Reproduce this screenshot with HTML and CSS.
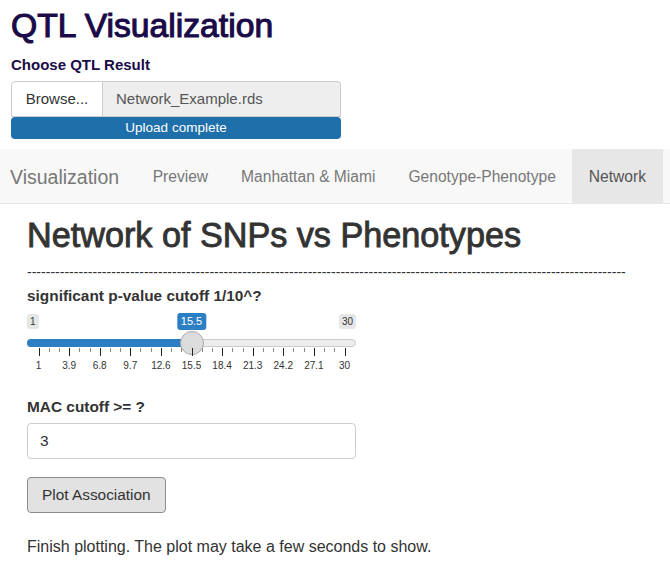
FILE: index.html
```html
<!DOCTYPE html>
<html>
<head>
<meta charset="utf-8">
<title>QTL Visualization</title>
<link rel="stylesheet" href="styles.css">
</head>
<body>
<header class="top">
  <h1 class="app-title">QTL Visualization</h1>
  <label class="top-label">Choose QTL Result</label>
  <div class="file-input">
    <span class="browse">Browse...</span>
    <span class="file-name">Network_Example.rds</span>
  </div>
  <div class="progress">Upload complete</div>
</header>

<nav class="navbar">
  <span class="brand">Visualization</span>
  <ul class="tabs">
    <li>Preview</li>
    <li>Manhattan &amp; Miami</li>
    <li>Genotype-Phenotype</li>
    <li class="active">Network</li>
  </ul>
</nav>

<main class="content">
  <h2 class="page-heading">Network of SNPs vs Phenotypes</h2>
  <p class="divider">--------------------------------------------------------------------------------------------------------------------------------</p>

  <label class="field-label">significant p-value cutoff 1/10^?</label>
  <div class="slider">
    <div class="slider-labels">
      <span class="irs-min">1</span>
      <span class="irs-max">30</span>
    </div>
    <span class="irs-single" style="left: 50%;">15.5</span>
    <div class="irs-line"><div class="irs-bar" style="width: calc(50% + 1px);"></div></div>
    <span class="irs-handle" style="left: 50%;"></span>
    <div class="irs-grid">
      <span class="pol" style="left:0%"></span>
      <span class="pol small" style="left:3.333%"></span>
      <span class="pol small" style="left:6.667%"></span>
      <span class="pol" style="left:10%"></span>
      <span class="pol small" style="left:13.333%"></span>
      <span class="pol small" style="left:16.667%"></span>
      <span class="pol" style="left:20%"></span>
      <span class="pol small" style="left:23.333%"></span>
      <span class="pol small" style="left:26.667%"></span>
      <span class="pol" style="left:30%"></span>
      <span class="pol small" style="left:33.333%"></span>
      <span class="pol small" style="left:36.667%"></span>
      <span class="pol" style="left:40%"></span>
      <span class="pol small" style="left:43.333%"></span>
      <span class="pol small" style="left:46.667%"></span>
      <span class="pol" style="left:50%"></span>
      <span class="pol small" style="left:53.333%"></span>
      <span class="pol small" style="left:56.667%"></span>
      <span class="pol" style="left:60%"></span>
      <span class="pol small" style="left:63.333%"></span>
      <span class="pol small" style="left:66.667%"></span>
      <span class="pol" style="left:70%"></span>
      <span class="pol small" style="left:73.333%"></span>
      <span class="pol small" style="left:76.667%"></span>
      <span class="pol" style="left:80%"></span>
      <span class="pol small" style="left:83.333%"></span>
      <span class="pol small" style="left:86.667%"></span>
      <span class="pol" style="left:90%"></span>
      <span class="pol small" style="left:93.333%"></span>
      <span class="pol small" style="left:96.667%"></span>
      <span class="pol" style="left:100%"></span>
      <span class="grid-text" style="left:0%">1</span>
      <span class="grid-text" style="left:10%">3.9</span>
      <span class="grid-text" style="left:20%">6.8</span>
      <span class="grid-text" style="left:30%">9.7</span>
      <span class="grid-text" style="left:40%">12.6</span>
      <span class="grid-text" style="left:50%">15.5</span>
      <span class="grid-text" style="left:60%">18.4</span>
      <span class="grid-text" style="left:70%">21.3</span>
      <span class="grid-text" style="left:80%">24.2</span>
      <span class="grid-text" style="left:90%">27.1</span>
      <span class="grid-text" style="left:100%">30</span>
    </div>
  </div>

  <label class="field-label mac-label">MAC cutoff &gt;= ?</label>
  <div class="text-input">3</div>

  <button class="btn">Plot Association</button>

  <p class="status">Finish plotting. The plot may take a few seconds to show.</p>
</main>
</body>
</html>
```

FILE: styles.css
```css
* { box-sizing: border-box; }

html, body {
  margin: 0;
  padding: 0;
  background: #ffffff;
}

body {
  font-family: "Liberation Sans", Arial, sans-serif;
  font-size: 15.4px;
  line-height: 20px;
  color: #333333;
  overflow: hidden;
}

/* ---------- top area ---------- */
.top {
  padding: 5px 0 0 11px;
}

.app-title {
  margin: 0;
  font-size: 33.7px;
  line-height: 40px;
  font-weight: normal;
  color: #1a0b48;
  -webkit-text-stroke: 1.1px #1a0b48;
}

.top-label {
  display: block;
  margin-top: 10px;
  font-size: 15px;
  font-weight: bold;
  color: #1a0b48;
}

.file-input {
  display: flex;
  width: 330px;
  height: 36px;
  margin-top: 6px;
  font-size: 15px;
}

.browse {
  width: 92px;
  display: flex;
  align-items: center;
  justify-content: center;
  background: #ffffff;
  border: 1px solid #cccccc;
  border-radius: 4px 0 0 0;
  color: #333333;
}

.file-name {
  flex: 1;
  display: flex;
  align-items: center;
  padding-left: 13px;
  background: #eeeeee;
  border: 1px solid #cccccc;
  border-left: 0;
  border-radius: 0 4px 0 0;
  color: #555555;
}

.progress {
  width: 330px;
  height: 22px;
  background: #1f6fab;
  color: #ffffff;
  font-size: 13.5px;
  line-height: 22px;
  text-align: center;
  border-radius: 4px;
}

/* ---------- navbar ---------- */
.navbar {
  display: flex;
  align-items: stretch;
  height: 55px;
  margin-top: 10px;
  background: #f8f8f8;
  border-bottom: 1px solid #e7e7e7;
}

.brand {
  display: flex;
  align-items: center;
  padding: 2px 17px 0 10px;
  font-size: 19.5px;
  color: #777777;
}

.tabs {
  display: flex;
  margin: 0;
  padding: 0;
  list-style: none;
  font-size: 15.6px;
}

.tabs li {
  display: flex;
  align-items: center;
  padding: 2px 16.5px 0;
  color: #777777;
}

.tabs li.active {
  background: #e7e7e7;
  color: #555555;
}

/* ---------- content ---------- */
.content {
  padding-left: 27px;
}

.page-heading {
  margin: 11px 0 0;
  font-size: 34.2px;
  line-height: 40px;
  font-weight: normal;
  color: #333333;
  -webkit-text-stroke: 0.9px #333333;
}

.divider {
  margin: 7px 0 0;
  font-size: 14.05px;
  line-height: 20px;
  white-space: nowrap;
}

.field-label {
  display: block;
  margin-top: 4px;
  font-weight: bold;
  color: #333333;
}

/* ---------- slider ---------- */
.slider {
  position: relative;
  width: 329px;
  height: 60px;
  margin-top: 7px;
}

.slider-labels {
  display: flex;
  justify-content: space-between;
  align-items: flex-start;
  height: 26px;
}

.irs-min,
.irs-max {
  display: block;
  padding: 1px 3px;
  margin-top: 1px;
  font-size: 10px;
  line-height: 13px;
  color: #333333;
  background: #e6e6e6;
  border-radius: 3px;
}

.irs-single {
  position: absolute;
  top: 0;
  transform: translateX(-50%);
  padding: 1px 4px;
  font-size: 11px;
  line-height: 15px;
  color: #ffffff;
  background: #2d7fc3;
  border-radius: 3px;
}

.irs-line {
  height: 8px;
  background: #ededed;
  border: 1px solid #cccccc;
  border-radius: 8px;
}

.irs-bar {
  height: 8px;
  margin: -1px 0 0 -1px;
  background: #2d7fc3;
  border-radius: 8px 0 0 8px;
}

.irs-handle {
  position: absolute;
  top: 18px;
  width: 24px;
  height: 24px;
  margin-left: -12px;
  background: #dcdcdc;
  border: 1px solid #ababab;
  border-radius: 50%;
}

.irs-grid {
  position: relative;
  height: 26px;
  margin: 0 11.5px;
}

.pol {
  position: absolute;
  top: 1px;
  width: 1px;
  height: 8px;
  background: #222222;
}

.pol.small {
  height: 4px;
  background: #8a8a8a;
}

.grid-text {
  position: absolute;
  top: 13px;
  transform: translateX(-50%);
  font-size: 10px;
  line-height: 12px;
  color: #333333;
  white-space: nowrap;
}

/* ---------- inputs ---------- */
.mac-label {
  margin-top: 24px;
}

.text-input {
  width: 329px;
  height: 36px;
  margin-top: 6px;
  padding: 0 12px;
  display: flex;
  align-items: center;
  border: 1px solid #cccccc;
  border-radius: 4px;
  color: #333333;
}

.btn {
  display: block;
  height: 36px;
  margin-top: 18px;
  padding: 0 14px;
  font-family: "Liberation Sans", Arial, sans-serif;
  font-size: 15.4px;
  color: #333333;
  background: #e2e2e2;
  border: 1px solid #8c8c8c;
  border-radius: 4px;
}

.status {
  margin: 24px 0 0;
  font-size: 16px;
}
```
